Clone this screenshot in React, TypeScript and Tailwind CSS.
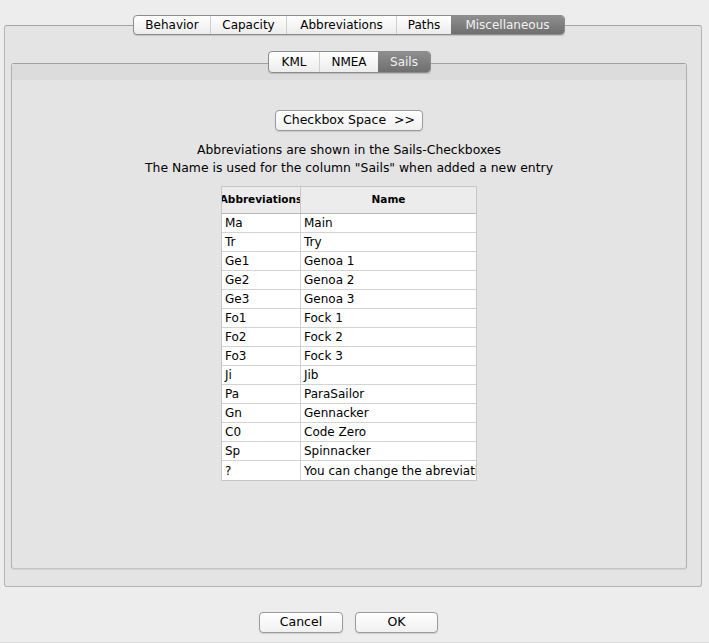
import React from "react";

const topTabs = [
  { label: "Behavior", w: "w-[76px]" },
  { label: "Capacity", w: "w-[76px]" },
  { label: "Abbreviations", w: "w-[110px]" },
  { label: "Paths", w: "w-[55px]" },
  { label: "Miscellaneous", w: "w-[113px]", active: true },
];

const subTabs = [
  { label: "KML", w: "w-[50px]" },
  { label: "NMEA", w: "w-[59px]" },
  { label: "Sails", w: "w-[52px]", active: true },
];

const sails = [
  ["Ma", "Main"],
  ["Tr", "Try"],
  ["Ge1", "Genoa 1"],
  ["Ge2", "Genoa 2"],
  ["Ge3", "Genoa 3"],
  ["Fo1", "Fock 1"],
  ["Fo2", "Fock 2"],
  ["Fo3", "Fock 3"],
  ["Ji", "Jib"],
  ["Pa", "ParaSailor"],
  ["Gn", "Gennacker"],
  ["C0", "Code Zero"],
  ["Sp", "Spinnacker"],
  ["?", "You can change the abreviations and names"],
];

function Segmented({ tabs, h }: { tabs: { label: string; w: string; active?: boolean }[]; h: string }) {
  return (
    <div className={`flex ${h} border border-[#8c8c8c] rounded-[4px] overflow-hidden bg-gradient-to-b from-white to-[#ececec] shadow-[0_1px_1px_rgba(0,0,0,0.15)]`}>
      {tabs.map((t, i) => (
        <div
          key={t.label}
          className={`${t.w} flex items-center justify-center text-[12px] ${
            t.active
              ? "bg-gradient-to-b from-[#8e8e8e] to-[#6f6f6f] text-[#f2f2f2]"
              : "text-black"
          } ${i > 0 && !t.active ? "border-l border-[#cfcfcf]" : ""}`}
        >
          {t.label}
        </div>
      ))}
    </div>
  );
}

function MacButton({ children, w }: { children: React.ReactNode; w: string }) {
  return (
    <button className={`${w} h-[21px] rounded-[4px] border border-[#9a9a9a] bg-gradient-to-b from-white to-[#f0f0f0] text-[12.5px] text-black shadow-[0_1px_1px_rgba(0,0,0,0.12)] flex items-center justify-center`}>
      {children}
    </button>
  );
}

export default function App() {
  return (
    <div className="w-[709px] h-[643px] bg-[#ededed] pt-[15px] font-['DejaVu_Sans',sans-serif] text-black overflow-hidden border-b border-[#dcdcdc]">
      <div className="ml-[133px] relative z-10 -mb-[10px] w-fit">
        <Segmented tabs={topTabs} h="h-[20px]" />
      </div>

      <div className="ml-[4px] w-[698px] h-[562px] bg-[#e4e4e4] border border-[#b4b4b4] border-t-[#a3a3a3] rounded-[3px] pt-[25px]">
        <div className="ml-[263px] relative z-10 -mb-[10px] w-fit">
          <Segmented tabs={subTabs} h="h-[22px]" />
        </div>

        <div className="ml-[6px] w-[676px] h-[506px] border border-[#b0b0b0] border-t-[#a0a0a0] border-b-[#c4c4c4] rounded-[3px] bg-[#e4e4e4] shadow-[0_1px_1px_rgba(0,0,0,0.08)] flex flex-col items-center">
          <div className="w-full h-[16px] bg-[#dcdcdc] shrink-0" />

          <div className="mt-[30px]">
            <MacButton w="w-[148px] h-[20px]">Checkbox Space&nbsp;&nbsp;&gt;&gt;</MacButton>
          </div>

          <div className="mt-[10px] text-[12.4px] leading-[18px] text-center">
            <p>Abbreviations are shown in the Sails-Checkboxes</p>
            <p>The Name is used for the column "Sails" when added a new entry</p>
          </div>

          <div className="mt-[9px] w-[256px] border border-[#c6c6c6] bg-white text-[12px]">
            <div className="flex h-[27px] bg-[#ececec] border-b border-[#b8b8b8] font-bold text-[10.5px]">
              <div className="w-[79px] flex items-center justify-center overflow-hidden whitespace-nowrap border-r border-[#c8c8c8]">
                <span className="shrink-0">Abbreviations</span>
              </div>
              <div className="flex-1 flex items-center justify-center">Name</div>
            </div>
            {sails.map(([a, n], i) => (
              <div
                key={a}
                className={`flex h-[19px] ${i < sails.length - 1 ? "border-b border-[#d3d3d3]" : ""}`}
              >
                <div className="w-[79px] pl-[3px] flex items-center border-r border-[#d3d3d3] whitespace-nowrap overflow-hidden">
                  {a}
                </div>
                <div className="flex-1 pl-[3px] flex items-center whitespace-nowrap overflow-hidden">{n}</div>
              </div>
            ))}
          </div>
        </div>
      </div>

      <div className="mt-[25px] flex justify-center gap-[12px] pr-[12px]">
        <MacButton w="w-[84px]">Cancel</MacButton>
        <MacButton w="w-[83px]">OK</MacButton>
      </div>
    </div>
  );
}
